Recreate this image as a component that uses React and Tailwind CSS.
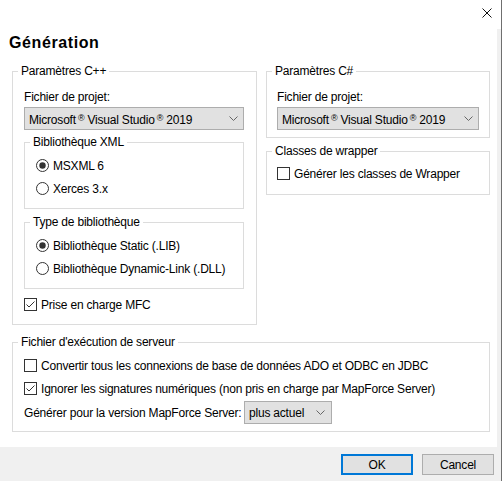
import React from "react";

function Check({ checked }) {
  return (
    <svg width="13" height="13" viewBox="0 0 13 13" className="flex-none">
      <rect x="0.5" y="0.5" width="12" height="12" fill="#fff" stroke="#333" />
      {checked && <path d="M2.5 6.5 L5 9 L10.5 3.5" fill="none" stroke="#333" strokeWidth="1" />}
    </svg>
  );
}

function Radio({ checked }) {
  return (
    <svg width="13" height="13" viewBox="0 0 13 13" className="flex-none">
      <circle cx="6.5" cy="6.5" r="6" fill="#fff" stroke="#333" />
      {checked && <circle cx="6.5" cy="6.5" r="3.2" fill="#333" />}
    </svg>
  );
}

function Chevron() {
  return (
    <svg width="9" height="5" viewBox="0 0 9 5" className="flex-none">
      <path d="M0.5 0.5 L4.5 4.5 L8.5 0.5" fill="none" stroke="#666" strokeWidth="1" />
    </svg>
  );
}

function Reg() {
  return <span className="text-[9px] align-[3px] ml-[2px]">®</span>;
}

function VsSelect() {
  return (
    <div className="h-[23px] mt-[2px] flex items-center justify-between border border-[#adadad] bg-[#e1e1e1] pl-[4px] pr-[5px]">
      <span className="whitespace-nowrap">
        Microsoft<Reg /> Visual Studio<Reg /> 2019
      </span>
      <Chevron />
    </div>
  );
}

function Row({ children, className = "" }) {
  return <div className={`h-[23px] flex items-center gap-[4px] whitespace-nowrap ${className}`}>{children}</div>;
}

export default function App() {
  return (
    <div className="w-[502px] h-[481px] flex flex-col bg-white border-r border-[#6f6f6f] text-[12px] leading-[16px] tracking-[-0.2px] text-black font-['Liberation_Sans',Arial,sans-serif] overflow-hidden">
      <div className="h-[29px] flex-none flex justify-end items-start pt-[8px] pr-[9px]">
        <svg width="10" height="10" viewBox="0 0 10 10">
          <path d="M0.5 0.5 L9.5 9.5 M9.5 0.5 L0.5 9.5" stroke="#111" strokeWidth="1" />
        </svg>
      </div>
      <div className="flex-1 flex">
        <div className="flex-1 flex flex-col">
          <div className="mt-[4px] ml-[9px] text-[16px] leading-[20px] font-bold tracking-[0.6px]">Génération</div>
          <div className="mt-[10px] ml-[12px] flex items-start gap-[9px]">
            <fieldset className="w-[245px] border border-[#dcdcdc]">
              <legend className="ml-[5px] px-[3px] leading-[16px]">Paramètres C++</legend>
              <div className="pl-[11px] pr-[12px] pb-[8px]">
                <div className="mt-[10px]">Fichier de projet:</div>
                <VsSelect />
                <fieldset className="mt-[4px] border border-[#dcdcdc]">
                  <legend className="ml-[5px] px-[3px] leading-[16px]">Bibliothèque XML</legend>
                  <div className="pl-[11px] pt-[4px] pb-[8px]">
                    <Row><Radio checked />MSXML 6</Row>
                    <Row><Radio />Xerces 3.x</Row>
                  </div>
                </fieldset>
                <fieldset className="mt-[5px] border border-[#dcdcdc]">
                  <legend className="ml-[5px] px-[3px] leading-[16px]">Type de bibliothèque</legend>
                  <div className="pl-[11px] pt-[4px] pb-[8px]">
                    <Row><Radio checked />Bibliothèque Static (.LIB)</Row>
                    <Row><Radio />Bibliothèque Dynamic-Link (.DLL)</Row>
                  </div>
                </fieldset>
                <Row className="mt-[4px]"><Check checked />Prise en charge MFC</Row>
              </div>
            </fieldset>
            <div className="w-[224px] flex flex-col">
              <fieldset className="border border-[#dcdcdc]">
                <legend className="ml-[5px] px-[3px] leading-[16px]">Paramètres C#</legend>
                <div className="px-[10px] pb-[7px]">
                  <div className="mt-[10px]">Fichier de projet:</div>
                  <VsSelect />
                </div>
              </fieldset>
              <fieldset className="mt-[5px] border border-[#dcdcdc]">
                <legend className="ml-[5px] px-[3px] leading-[16px]">Classes de wrapper</legend>
                <div className="px-[10px] pt-[3px] pb-[9px]">
                  <Row><Check />Générer les classes de Wrapper</Row>
                </div>
              </fieldset>
            </div>
          </div>
          <fieldset className="mt-[9px] ml-[12px] w-[478px] border border-[#dcdcdc]">
            <legend className="ml-[5px] px-[3px] leading-[16px]">Fichier d'exécution de serveur</legend>
            <div className="pl-[11px] pt-[4px] pb-[7px]">
              <Row><Check />Convertir tous les connexions de base de données ADO et ODBC en JDBC</Row>
              <Row><Check checked />Ignorer les signatures numériques (non pris en charge par MapForce Server)</Row>
              <div className="mt-[1px] h-[23px] flex items-center whitespace-nowrap">
                <span className="w-[220px] flex-none">Générer pour la version MapForce Server:</span>
                <div className="w-[88px] h-[23px] flex items-center justify-between border border-[#adadad] bg-[#e1e1e1] pl-[4px] pr-[6px]">
                  <span>plus actuel</span>
                  <Chevron />
                </div>
              </div>
            </div>
          </fieldset>
        </div>
        <div className="w-[4px] flex-none bg-[#f0f0f0]" />
      </div>
      <div className="h-[34px] flex-none bg-[#f0f0f0] flex justify-end items-start pt-[7px] pr-[7px] gap-[9px]">
        <button className="w-[72px] h-[21px] border-2 border-[#0078d7] bg-[#e1e1e1] flex items-center justify-center">OK</button>
        <button className="w-[72px] h-[21px] border border-[#adadad] bg-[#e1e1e1] flex items-center justify-center">Cancel</button>
      </div>
    </div>
  );
}
